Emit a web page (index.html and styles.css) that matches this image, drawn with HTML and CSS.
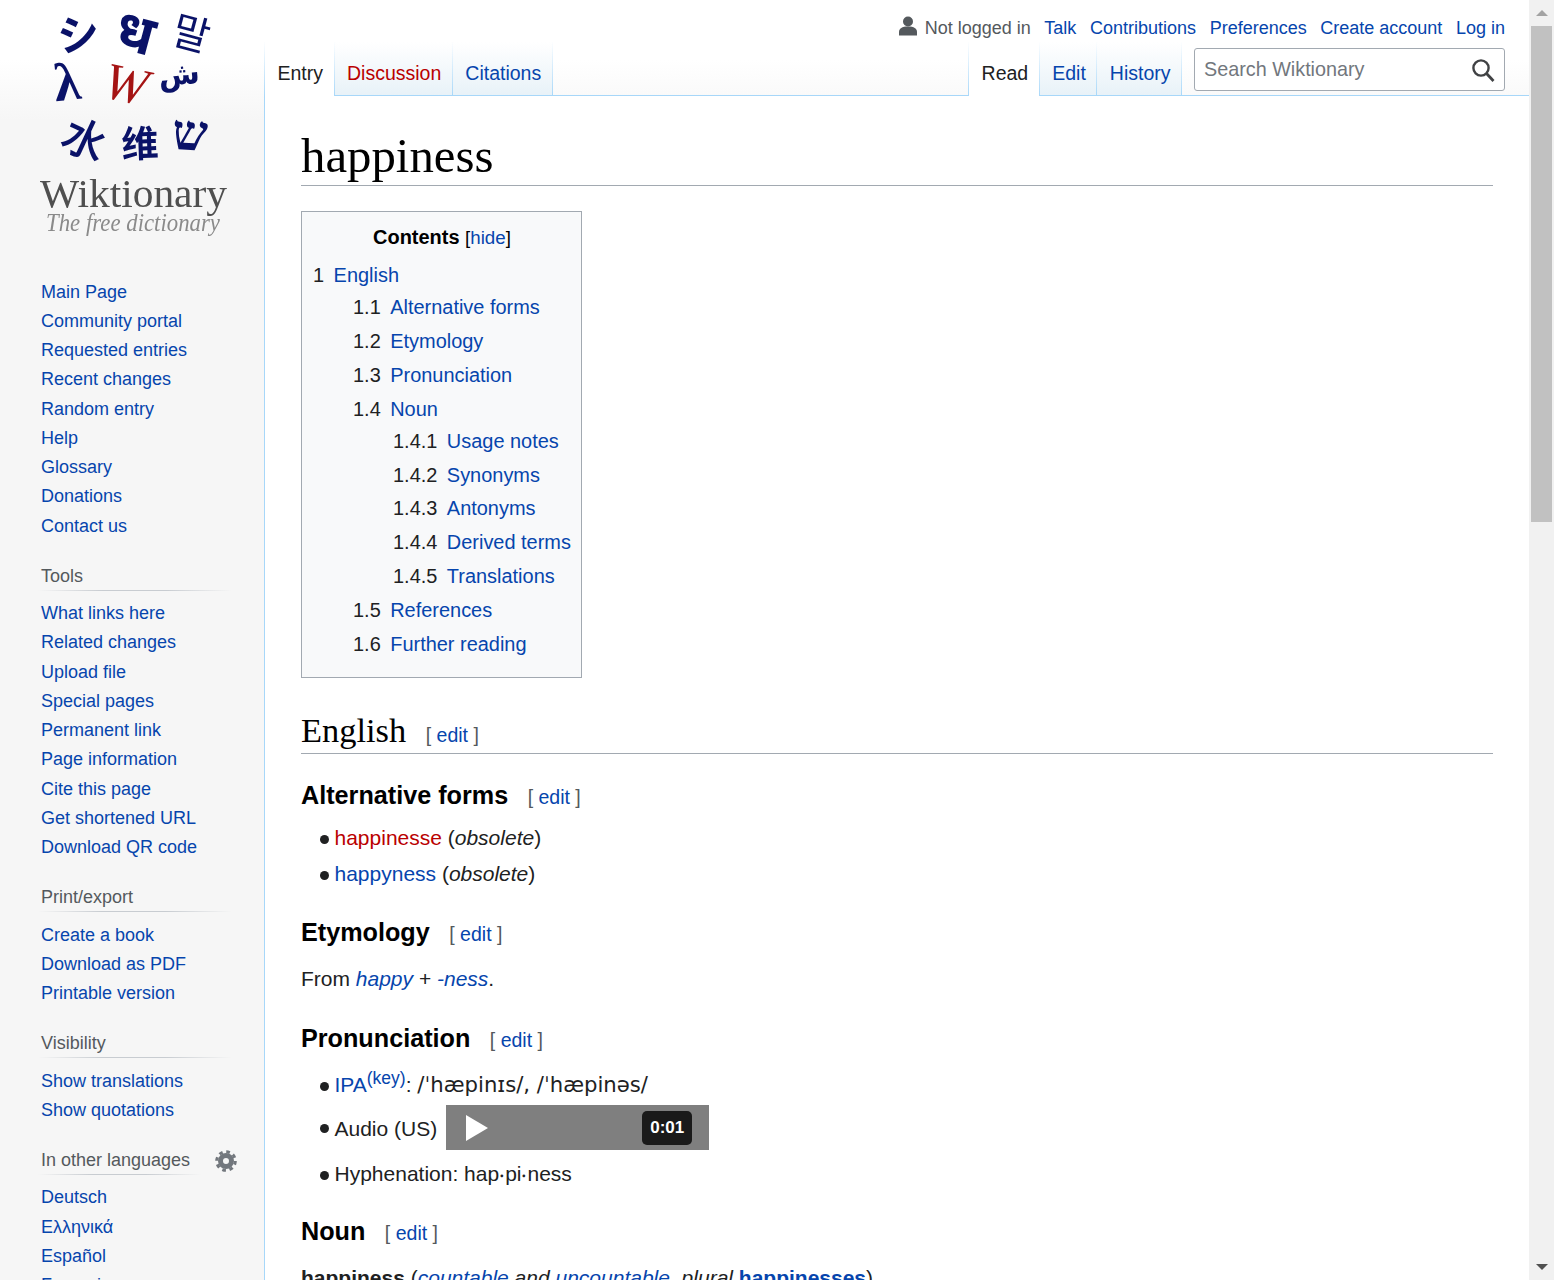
FILE: index.html
```html
<!DOCTYPE html>
<html lang="en">
<head>
    <meta charset="UTF-8">
    <title>happiness - Wiktionary</title>
    <link rel="stylesheet" href="styles.css">
</head>
<body>
<div class="page">
    <aside class="sidebar">
        <a class="logo" href="#">
            <svg width="264" height="240" viewBox="0 0 264 240">
                <text class="g g-cjk g-big" transform="translate(78 31) rotate(-8)">シ</text>
                <text class="g g-dv" transform="translate(136 30) rotate(15)">ध</text>
                <text class="g g-kr" transform="translate(192 31) rotate(15)">말</text>
                <text class="g g-la" transform="translate(67 82) rotate(-6)">λ</text>
                <text class="g g-w" transform="translate(126 84) rotate(12)">W</text>
                <text class="g g-ar" transform="translate(179 74) rotate(-5)">ش</text>
                <text class="g g-cjk g-thin" transform="translate(86 137) rotate(25)">水</text>
                <text class="g g-cjk" transform="translate(140 141) rotate(-2)">维</text>
                <text class="g g-he" transform="translate(190 133) rotate(3)">ש</text>
                <text class="logo-name" x="40" y="207" textLength="187" lengthAdjust="spacingAndGlyphs">Wiktionary</text>
                <text class="logo-tag" x="46" y="231" textLength="174" lengthAdjust="spacingAndGlyphs">The free dictionary</text>
            </svg>
        </a>
        <nav class="portal portal-first">
            <ul>
                <li><a href="#">Main Page</a></li>
                <li><a href="#">Community portal</a></li>
                <li><a href="#">Requested entries</a></li>
                <li><a href="#">Recent changes</a></li>
                <li><a href="#">Random entry</a></li>
                <li><a href="#">Help</a></li>
                <li><a href="#">Glossary</a></li>
                <li><a href="#">Donations</a></li>
                <li><a href="#">Contact us</a></li>
            </ul>
        </nav>
        <nav class="portal">
            <h3>Tools</h3>
            <ul>
                <li><a href="#">What links here</a></li>
                <li><a href="#">Related changes</a></li>
                <li><a href="#">Upload file</a></li>
                <li><a href="#">Special pages</a></li>
                <li><a href="#">Permanent link</a></li>
                <li><a href="#">Page information</a></li>
                <li><a href="#">Cite this page</a></li>
                <li><a href="#">Get shortened URL</a></li>
                <li><a href="#">Download QR code</a></li>
            </ul>
        </nav>
        <nav class="portal">
            <h3>Print/export</h3>
            <ul>
                <li><a href="#">Create a book</a></li>
                <li><a href="#">Download as PDF</a></li>
                <li><a href="#">Printable version</a></li>
            </ul>
        </nav>
        <nav class="portal">
            <h3>Visibility</h3>
            <ul>
                <li><a href="#">Show translations</a></li>
                <li><a href="#">Show quotations</a></li>
            </ul>
        </nav>
        <nav class="portal portal-lang">
            <div class="lang-head">
                <h3>In other languages</h3>
                <svg class="gear" width="22" height="22" viewBox="0 0 22 22">
                    <circle cx="11" cy="11" r="5.5" fill="none" stroke="#72777d" stroke-width="5"/>
                    <circle cx="11" cy="11" r="9.3" fill="none" stroke="#72777d" stroke-width="3" stroke-dasharray="3.65 3.65"/>
                </svg>
            </div>
            <ul>
                <li><a href="#">Deutsch</a></li>
                <li><a href="#">Ελληνικά</a></li>
                <li><a href="#">Español</a></li>
                <li><a href="#">Français</a></li>
            </ul>
        </nav>
    </aside>

    <div class="main">
        <div class="personal">
            <svg class="user-icon" width="20" height="20" viewBox="0 0 20 20">
                <circle cx="10" cy="5.5" r="5" fill="#54595d"/>
                <path d="M1 19.5v-3.5c0-3.5 3-5.5 9-5.5s9 2 9 5.5v3.5z" fill="#54595d"/>
            </svg>
            <span class="not-logged">Not logged in</span>
            <a href="#">Talk</a>
            <a href="#">Contributions</a>
            <a href="#">Preferences</a>
            <a href="#">Create account</a>
            <a href="#">Log in</a>
        </div>
        <div class="tabbar">
            <ul class="tabs">
                <li class="tab selected"><a href="#">Entry</a></li>
                <li class="tab"><a class="new" href="#">Discussion</a></li>
                <li class="tab"><a href="#">Citations</a></li>
            </ul>
            <div class="tabbar-right">
                <ul class="tabs">
                    <li class="tab selected"><a href="#">Read</a></li>
                    <li class="tab"><a href="#">Edit</a></li>
                    <li class="tab"><a href="#">History</a></li>
                </ul>
                <div class="search">
                    <span class="search-text">Search Wiktionary</span>
                    <svg width="24" height="24" viewBox="0 0 24 24">
                        <circle cx="10" cy="10" r="7.6" fill="none" stroke="#404244" stroke-width="2.4"/>
                        <path d="M15.5 15.5l7 7.5" stroke="#404244" stroke-width="2.8" fill="none"/>
                    </svg>
                </div>
            </div>
        </div>

        <main class="content">
            <h1>happiness</h1>

            <div class="toc">
                <div class="toc-title"><b>Contents</b> <span class="toc-toggle">[<a href="#">hide</a>]</span></div>
                <ul>
                    <li><span class="num">1</span><a href="#">English</a>
                        <ul>
                            <li><span class="num">1.1</span><a href="#">Alternative forms</a></li>
                            <li><span class="num">1.2</span><a href="#">Etymology</a></li>
                            <li><span class="num">1.3</span><a href="#">Pronunciation</a></li>
                            <li><span class="num">1.4</span><a href="#">Noun</a>
                                <ul>
                                    <li><span class="num">1.4.1</span><a href="#">Usage notes</a></li>
                                    <li><span class="num">1.4.2</span><a href="#">Synonyms</a></li>
                                    <li><span class="num">1.4.3</span><a href="#">Antonyms</a></li>
                                    <li><span class="num">1.4.4</span><a href="#">Derived terms</a></li>
                                    <li><span class="num">1.4.5</span><a href="#">Translations</a></li>
                                </ul>
                            </li>
                            <li><span class="num">1.5</span><a href="#">References</a></li>
                            <li><span class="num">1.6</span><a href="#">Further reading</a></li>
                        </ul>
                    </li>
                </ul>
            </div>

            <h2>English <span class="edit">[ <a href="#">edit</a> ]</span></h2>

            <h3>Alternative forms <span class="edit">[ <a href="#">edit</a> ]</span></h3>
            <ul class="bullets">
                <li><a class="new" href="#">happinesse</a> (<i>obsolete</i>)</li>
                <li><a href="#">happyness</a> (<i>obsolete</i>)</li>
            </ul>

            <h3>Etymology <span class="edit">[ <a href="#">edit</a> ]</span></h3>
            <p>From <i><a href="#">happy</a></i> + <i><a href="#">-ness</a></i>.</p>

            <h3>Pronunciation <span class="edit">[ <a href="#">edit</a> ]</span></h3>
            <ul class="bullets">
                <li class="ipa-row"><a href="#">IPA</a><sup><a href="#">(key)</a></sup>: <span class="ipa">/ˈhæpinɪs/, /ˈhæpinəs/</span></li>
                <li class="audio-row">Audio (US)
                    <span class="player">
                        <span class="play"></span>
                        <span class="time">0:01</span>
                    </span>
                </li>
                <li>Hyphenation: hap‧pi‧ness</li>
            </ul>

            <h3>Noun <span class="edit">[ <a href="#">edit</a> ]</span></h3>
            <p><b>happiness</b> (<i><a href="#">countable</a> and <a href="#">uncountable</a></i>, <i>plural</i> <b><a href="#">happinesses</a></b>)</p>
        </main>
    </div>

    <div class="scrollbar">
        <span class="arrow arrow-up"></span>
        <div class="track"><div class="thumb"></div></div>
        <span class="arrow arrow-down"></span>
    </div>
</div>
</body>
</html>
```

FILE: styles.css
```css
html, body {
    margin: 0;
    height: 1280px;
    overflow: hidden;
}
body {
    font-family: "Liberation Sans", Arial, sans-serif;
    background-color: #f6f6f6;
    background-image: linear-gradient(#fff 60px, #f6f6f6 120px);
    background-size: 100% 120px;
    background-repeat: no-repeat;
    color: #202122;
}
a {
    color: #0645ad;
    text-decoration: none;
}
a.new {
    color: #ba0000;
}
ul {
    list-style: none;
    margin: 0;
    padding: 0;
}
.page {
    display: flex;
    height: 1280px;
    overflow: hidden;
}

/* sidebar */
.sidebar {
    width: 264px;
    flex: none;
}
.logo {
    display: block;
    height: 240px;
}
.logo svg {
    display: block;
    filter: blur(0.35px);
}
.g {
    fill: #0a1268;
    text-anchor: middle;
    dominant-baseline: central;
    font-family: "Noto Sans CJK SC", sans-serif;
    font-size: 37px;
    font-weight: bold;
}
.g-big {
    font-size: 42px;
}
.g-thin {
    font-size: 44px;
    font-weight: 500;
}
.g-dv {
    font-family: "Noto Sans", "DejaVu Sans", sans-serif;
    font-size: 56px;
    font-weight: bold;
}
.g-kr {
    font-family: "Noto Sans CJK KR", sans-serif;
    font-size: 40px;
    font-weight: normal;
}
.g-la {
    font-family: "Liberation Serif", serif;
    font-size: 54px;
    font-weight: bold;
}
.g-w {
    fill: #a51414;
    font-family: "Liberation Serif", serif;
    font-style: italic;
    font-size: 52px;
    font-weight: normal;
}
.g-ar {
    font-family: "DejaVu Sans", sans-serif;
    font-size: 30px;
}
.g-he {
    font-family: "Liberation Serif", serif;
    font-size: 50px;
}
.logo-name {
    fill: #4f4f4f;
    font-family: "Liberation Serif", serif;
    font-size: 39px;
}
.logo-tag {
    fill: #8a8a8a;
    font-family: "Liberation Serif", serif;
    font-style: italic;
    font-size: 26px;
}
.portal {
    margin-top: 20.1px;
    font-size: 18px;
}
.portal-first {
    margin-top: 37.5px;
}
.portal h3 {
    margin: 0 32px 0 38px;
    padding-left: 3px;
    height: 30px;
    font-size: 18px;
    font-weight: normal;
    line-height: 30px;
    color: #54595d;
    background-image: linear-gradient(to right, rgba(200, 204, 209, 0) 0, #c8ccd1 33%, #c8ccd1 66%, rgba(200, 204, 209, 0) 100%);
    background-size: 100% 1px;
    background-position: bottom;
    background-repeat: no-repeat;
}
.portal ul {
    margin-top: 8.2px;
    padding-left: 41px;
}
.portal-first ul {
    margin-top: 0;
}
.portal li {
    line-height: 29.25px;
    white-space: nowrap;
}
.lang-head {
    display: flex;
    align-items: center;
    gap: 14px;
}
.lang-head h3 {
    flex: 1;
    margin-right: 0;
}
.gear {
    margin: 2px 27px 0 0;
}

/* top of the page */
.main {
    flex: 1;
    min-width: 0;
}
.personal {
    height: 28px;
    padding-top: 14px;
    padding-right: 24px;
    display: flex;
    justify-content: flex-end;
    align-items: center;
    gap: 13.6px;
    font-size: 18px;
}
.not-logged {
    color: #54595d;
}
.user-icon {
    margin-right: -7px;
    margin-top: -5px;
}
.tabbar {
    height: 53px;
    display: flex;
    justify-content: space-between;
}
.tabbar-right {
    display: flex;
    padding-right: 24px;
}
.tabs {
    display: flex;
    height: 54px;
    font-size: 19.5px;
    position: relative;
    z-index: 1;
}
.tab {
    border-style: solid;
    border-width: 0 1px 0 0;
    border-image: linear-gradient(#fff, #a7d7f9) 1;
    background-image: linear-gradient(#fff, #e8f2f8);
    padding: 0 10.5px 0 12.5px;
    line-height: 62px;
    height: 53px;
}
.tab.selected {
    background-image: none;
    background-color: #fff;
    height: 54px;
    border-width: 0 1px 0 1px;
}
.tab.selected a {
    color: #202122;
}
.search {
    margin: 6px 0 0 12px;
    border: 1px solid #a2a9b1;
    border-radius: 3px;
    background: #fff;
    display: flex;
    align-items: center;
    justify-content: space-between;
    padding: 0 9px;
    box-sizing: border-box;
    width: 311px;
    height: 43px;
    font-size: 19.8px;
    color: #72777d;
}
.search svg {
    margin-top: 1px;
}

/* article */
.content {
    background: #fff;
    border-top: 1px solid #a7d7f9;
    border-left: 1px solid #a7d7f9;
    padding: 0 36px;
    height: 1200px;
    font-size: 21px;
    line-height: 34px;
}
h1 {
    margin: 0;
    padding-top: 32px;
    font-family: "Liberation Serif", serif;
    font-size: 48.8px;
    font-weight: normal;
    line-height: 57px;
    color: #000;
    border-bottom: 1px solid #a2a9b1;
}
.toc {
    display: table;
    margin-top: 25px;
    width: 281px;
    box-sizing: border-box;
    padding: 9.4px 10px 15.6px 11px;
    background: #f8f9fa;
    border: 1px solid #a2a9b1;
    font-size: 19.95px;
    line-height: 32px;
}
.toc-title {
    text-align: center;
    color: #000;
    margin-bottom: 5px;
}
.toc-toggle {
    font-size: 18.75px;
}
.toc ul ul {
    margin-left: 40px;
}
.toc li {
    margin-bottom: 1.8px;
    white-space: nowrap;
}
.num {
    padding-right: 9.5px;
    color: #202122;
}
h2 {
    margin: 31px 0 0;
    padding-bottom: 2px;
    font-family: "Liberation Serif", serif;
    font-size: 34.4px;
    font-weight: normal;
    line-height: 42px;
    color: #000;
    border-bottom: 1px solid #a2a9b1;
}
h3 {
    margin: 22px 0 0;
    font-size: 25.2px;
    line-height: 38px;
    color: #000;
}
p + h3 {
    margin-top: 23px;
}
.edit {
    margin-left: 12.5px;
    font-family: "Liberation Sans", Arial, sans-serif;
    font-size: 19.5px;
    font-weight: normal;
    line-height: 1;
    color: #54595d;
}
h2 .edit {
    margin-left: 11px;
}
p {
    margin: 11px 0 0;
}
.bullets {
    margin: 7px 0 0 33.5px;
}
.bullets li {
    position: relative;
    margin-bottom: 2px;
    line-height: 34px;
    white-space: nowrap;
}
.bullets li::before {
    content: "";
    position: absolute;
    left: -14.5px;
    top: 14px;
    width: 9px;
    height: 9px;
    border-radius: 50%;
    background: #202122;
}
sup {
    font-size: 17.5px;
    line-height: 0;
}
.ipa {
    font-family: "DejaVu Sans", sans-serif;
    font-size: 21.2px;
}
.ipa-row {
    padding-top: 4px;
}
.bullets .ipa-row::before {
    top: 18px;
}
.bullets .audio-row {
    display: flex;
    align-items: center;
    gap: 9px;
    height: 45px;
    margin-bottom: 5px;
    padding-top: 3px;
}
.bullets .audio-row + li {
    margin-bottom: -1px;
}
.bullets .audio-row::before {
    top: 20px;
}
.player {
    width: 263px;
    height: 45px;
    margin-top: -3px;
    background: #7f7f7f;
    display: flex;
    align-items: center;
    justify-content: space-between;
    padding: 0 17px 0 20px;
    box-sizing: border-box;
}
.play {
    width: 0;
    height: 0;
    border-left: 22px solid #fff;
    border-top: 13px solid transparent;
    border-bottom: 13px solid transparent;
}
.time {
    width: 50px;
    height: 34px;
    border-radius: 5px;
    background: #1a1a1a;
    color: #fff;
    font-size: 17px;
    font-weight: bold;
    line-height: 34px;
    text-align: center;
}

/* fake window scrollbar */
.scrollbar {
    width: 25px;
    flex: none;
    background: #f1f1f1;
    display: flex;
    flex-direction: column;
    align-items: center;
    height: 1280px;
}
.arrow {
    flex: none;
    width: 0;
    height: 0;
    border-left: 6px solid transparent;
    border-right: 6px solid transparent;
}
.arrow-up {
    border-bottom: 6px solid #a3a3a3;
    margin: 10px 0 10px;
}
.arrow-down {
    border-top: 6px solid #505050;
    margin: 10px 0 10px;
}
.track {
    flex: 1;
    width: 100%;
}
.thumb {
    width: 21px;
    height: 496px;
    margin-left: 2px;
    background: #c1c1c1;
}
```
